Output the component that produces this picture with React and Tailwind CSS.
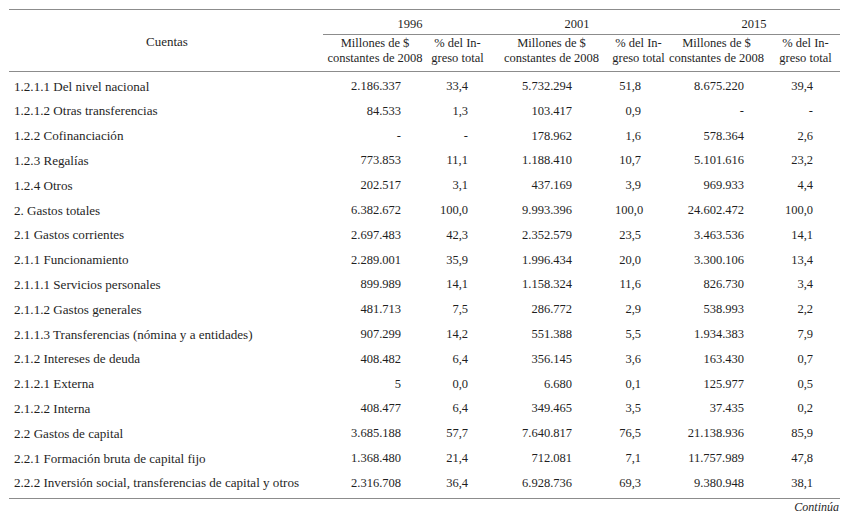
import React from "react";

const rows = [
  ["1.2.1.1 Del nivel nacional", "2.186.337", "33,4", "5.732.294", "51,8", "8.675.220", "39,4"],
  ["1.2.1.2 Otras transferencias", "84.533", "1,3", "103.417", "0,9", "-", "-"],
  ["1.2.2 Cofinanciación", "-", "-", "178.962", "1,6", "578.364", "2,6"],
  ["1.2.3 Regalías", "773.853", "11,1", "1.188.410", "10,7", "5.101.616", "23,2"],
  ["1.2.4 Otros", "202.517", "3,1", "437.169", "3,9", "969.933", "4,4"],
  ["2. Gastos totales", "6.382.672", "100,0", "9.993.396", "100,0", "24.602.472", "100,0"],
  ["2.1 Gastos corrientes", "2.697.483", "42,3", "2.352.579", "23,5", "3.463.536", "14,1"],
  ["2.1.1 Funcionamiento", "2.289.001", "35,9", "1.996.434", "20,0", "3.300.106", "13,4"],
  ["2.1.1.1 Servicios personales", "899.989", "14,1", "1.158.324", "11,6", "826.730", "3,4"],
  ["2.1.1.2 Gastos generales", "481.713", "7,5", "286.772", "2,9", "538.993", "2,2"],
  ["2.1.1.3 Transferencias (nómina y a entidades)", "907.299", "14,2", "551.388", "5,5", "1.934.383", "7,9"],
  ["2.1.2 Intereses de deuda", "408.482", "6,4", "356.145", "3,6", "163.430", "0,7"],
  ["2.1.2.1 Externa", "5", "0,0", "6.680", "0,1", "125.977", "0,5"],
  ["2.1.2.2 Interna", "408.477", "6,4", "349.465", "3,5", "37.435", "0,2"],
  ["2.2 Gastos de capital", "3.685.188", "57,7", "7.640.817", "76,5", "21.138.936", "85,9"],
  ["2.2.1 Formación bruta de capital fijo", "1.368.480", "21,4", "712.081", "7,1", "11.757.989", "47,8"],
  ["2.2.2 Inversión social, transferencias de capital y otros", "2.316.708", "36,4", "6.928.736", "69,3", "9.380.948", "38,1"],
];

function MillHead() {
  return (
    <div className="text-center leading-[15px] whitespace-nowrap">
      Millones de $<br />constantes de 2008
    </div>
  );
}
function PctHead() {
  return (
    <div className="text-center leading-[15px] whitespace-nowrap">
      % del In-<br />greso total
    </div>
  );
}

export default function App() {
  return (
    <div className="w-[850px] h-[514px] bg-white text-[#1f1f1f] text-[12.5px] overflow-hidden font-['Liberation_Serif','DejaVu_Serif',serif]">
      <div className="ml-[9px] mt-[9px] w-[831px] border-t border-[#8c8c8c]">
        {/* Header */}
        <div className="flex border-b border-[#8c8c8c] h-[62px]">
          <div className="w-[314px] flex items-center justify-center pt-[3px] pl-[2px] text-[13px]">Cuentas</div>
          <div className="w-[517px] flex flex-col">
            <div className="h-[25px] flex border-b border-[#8c8c8c]">
              <div className="w-[165px] flex items-center justify-center pl-[9px] pt-[4px]">1996</div>
              <div className="w-[174px] flex items-center justify-center pl-[4px] pt-[4px]">2001</div>
              <div className="w-[178px] flex items-center justify-center pl-[6px] pt-[4px]">2015</div>
            </div>
            <div className="flex-1 flex items-center pb-[4px]">
              <div className="w-[104px] flex justify-center"><MillHead /></div>
              <div className="w-[61px] flex justify-center"><PctHead /></div>
              <div className="w-[127px] flex justify-center"><MillHead /></div>
              <div className="w-[47px] flex justify-center"><PctHead /></div>
              <div className="w-[109px] flex justify-center"><MillHead /></div>
              <div className="w-[69px] flex justify-center"><PctHead /></div>
            </div>
          </div>
        </div>
        {/* Body */}
        <div className="pt-[2px] pb-[2px] border-b border-[#8c8c8c]">
          {rows.map((r, i) => (
            <div key={i} className="flex h-[24.8px] items-center">
              <div className="w-[314px] pl-[5px] whitespace-nowrap text-[13.1px]">{r[0]}</div>
              <div className="w-[104px] text-right pr-[26px]">{r[1]}</div>
              <div className="w-[61px] text-right pr-[20px]">{r[2]}</div>
              <div className="w-[127px] text-right pr-[43px]">{r[3]}</div>
              <div className="w-[47px] text-right pr-[21px]">{r[4]}</div>
              <div className="w-[109px] text-right pr-[27px]">{r[5]}</div>
              <div className="w-[69px] text-right pr-[27px]">{r[6]}</div>
            </div>
          ))}
        </div>
        <div className="text-right italic text-[12px] leading-[14px] pt-[1px] pr-[1px]">Continúa</div>
      </div>
    </div>
  );
}
